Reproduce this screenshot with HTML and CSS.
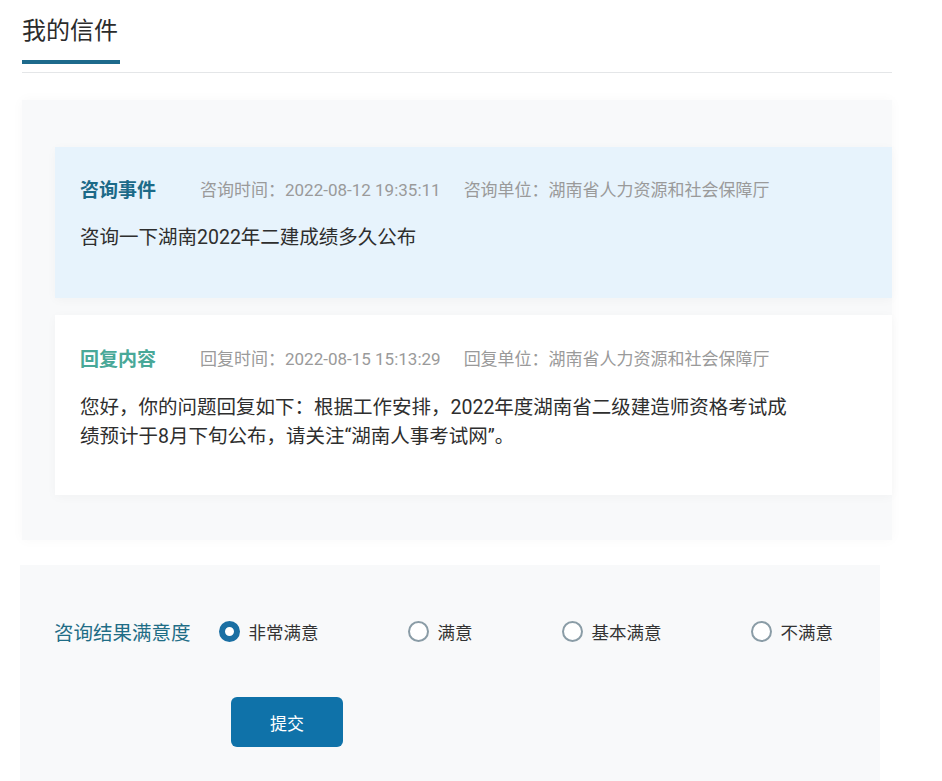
FILE: index.html
```html
<!DOCTYPE html>
<html lang="zh-CN">
<head>
    <meta charset="UTF-8">
    <meta name="viewport" content="width=device-width, initial-scale=1.0">
    <title>我的信件</title>
    <link rel="stylesheet" href="styles.css">
</head>
<body>
    <div class="page">
        <div class="tabs">
            <h1>我的信件</h1>
            <div class="tab-bar"></div>
        </div>

        <div class="letter-panel">
            <div class="letter-card card-ask">
                <div class="card-head">
                    <span class="card-title title-ask">咨询事件</span>
                    <span class="meta">咨询时间：2022-08-12 19:35:11</span>
                    <span class="meta">咨询单位：湖南省人力资源和社会保障厅</span>
                </div>
                <div class="card-body">咨询一下湖南2022年二建成绩多久公布</div>
            </div>

            <div class="letter-card card-reply">
                <div class="card-head">
                    <span class="card-title title-reply">回复内容</span>
                    <span class="meta">回复时间：2022-08-15 15:13:29</span>
                    <span class="meta">回复单位：湖南省人力资源和社会保障厅</span>
                </div>
                <div class="card-body reply-text">您好，你的问题回复如下：根据工作安排，2022年度湖南省二级建造师资格考试成绩预计于8月下旬公布，请关注“湖南人事考试网”。</div>
            </div>
        </div>

        <div class="rate-panel">
            <div class="rate-row">
                <span class="rate-label">咨询结果满意度</span>
                <label class="rate-option"><input type="radio" name="rate" checked><span>非常满意</span></label>
                <label class="rate-option"><input type="radio" name="rate"><span>满意</span></label>
                <label class="rate-option"><input type="radio" name="rate"><span>基本满意</span></label>
                <label class="rate-option"><input type="radio" name="rate"><span>不满意</span></label>
            </div>
            <button class="btn-submit">提交</button>
        </div>
    </div>
</body>
</html>
```

FILE: styles.css
```css
body {
    margin: 0;
    padding: 0;
    background: #fff;
    color: #333;
    font-family: Roboto, "Noto Sans CJK SC", sans-serif;
}

.page {
    width: 870px;
    padding-left: 22px;
}

.tabs {
    border-bottom: 1px solid #e4e6e8;
    padding-bottom: 8px;
}

.tabs h1 {
    margin: 0;
    padding-top: 15px;
    font-size: 24px;
    line-height: 32px;
    font-weight: 400;
    color: #2b2b2b;
}

.tab-bar {
    width: 98px;
    height: 4px;
    margin-top: 13px;
    background: #1d6a8c;
}

.letter-panel {
    margin-top: 27px;
    padding: 47px 0 45px 33px;
    background: #f8f9fa;
    box-shadow: 0 0 12px rgba(0,0,0,0.03);
}

.letter-card {
    padding: 28px 0 0 25px;
    box-shadow: 0 2px 10px rgba(0,0,0,0.03);
}

.card-ask {
    height: 123px;
    background: #e7f3fc;
}

.card-reply {
    margin-top: 17px;
    height: 151px;
    padding-top: 29px;
    background: #fff;
}

.card-head {
    display: flex;
    align-items: center;
    height: 26px;
    white-space: nowrap;
}

.card-title {
    font-size: 19px;
    font-weight: 600;
    margin-right: 44px;
}

.title-ask { color: #1c6a88; }
.title-reply { color: #48a898; }

.meta {
    font-size: 17px;
    color: #9a9a9a;
    margin-right: 23px;
}

.card-body {
    margin-top: 22px;
    font-size: 19.5px;
    line-height: 29px;
    color: #2e2e2e;
}

.reply-text {
    margin-top: 23px;
    width: 720px;
}

.rate-panel {
    width: 860px;
    margin-top: 25px;
    margin-left: -2px;
    padding: 51px 0 40px 34px;
    background: #f8f9fa;
    box-sizing: border-box;
}

.rate-row {
    display: flex;
    align-items: center;
    height: 30px;
    white-space: nowrap;
}

.rate-label {
    flex-shrink: 0;
    font-size: 19.5px;
    color: #1f6d86;
    margin-right: 28px;
}

.rate-option {
    flex-shrink: 0;
    display: flex;
    align-items: center;
    margin-right: 89px;
    font-size: 17.5px;
    color: #333;
    cursor: pointer;
}

.rate-option:last-child {
    margin-right: 0;
}

.rate-option input {
    appearance: none;
    -webkit-appearance: none;
    width: 21px;
    height: 21px;
    margin: 0 9px 0 0;
    border: 2px solid #8a9ca6;
    border-radius: 50%;
    background: #fff;
    box-sizing: border-box;
}

.rate-option input:checked {
    border: 6px solid #1a6fa3;
}

.btn-submit {
    display: block;
    margin: 51px 0 0 177px;
    width: 112px;
    height: 50px;
    border: none;
    border-radius: 6px;
    background: #0f72a9;
    color: #fff;
    font-size: 17px;
    font-family: inherit;
    cursor: pointer;
}
```
